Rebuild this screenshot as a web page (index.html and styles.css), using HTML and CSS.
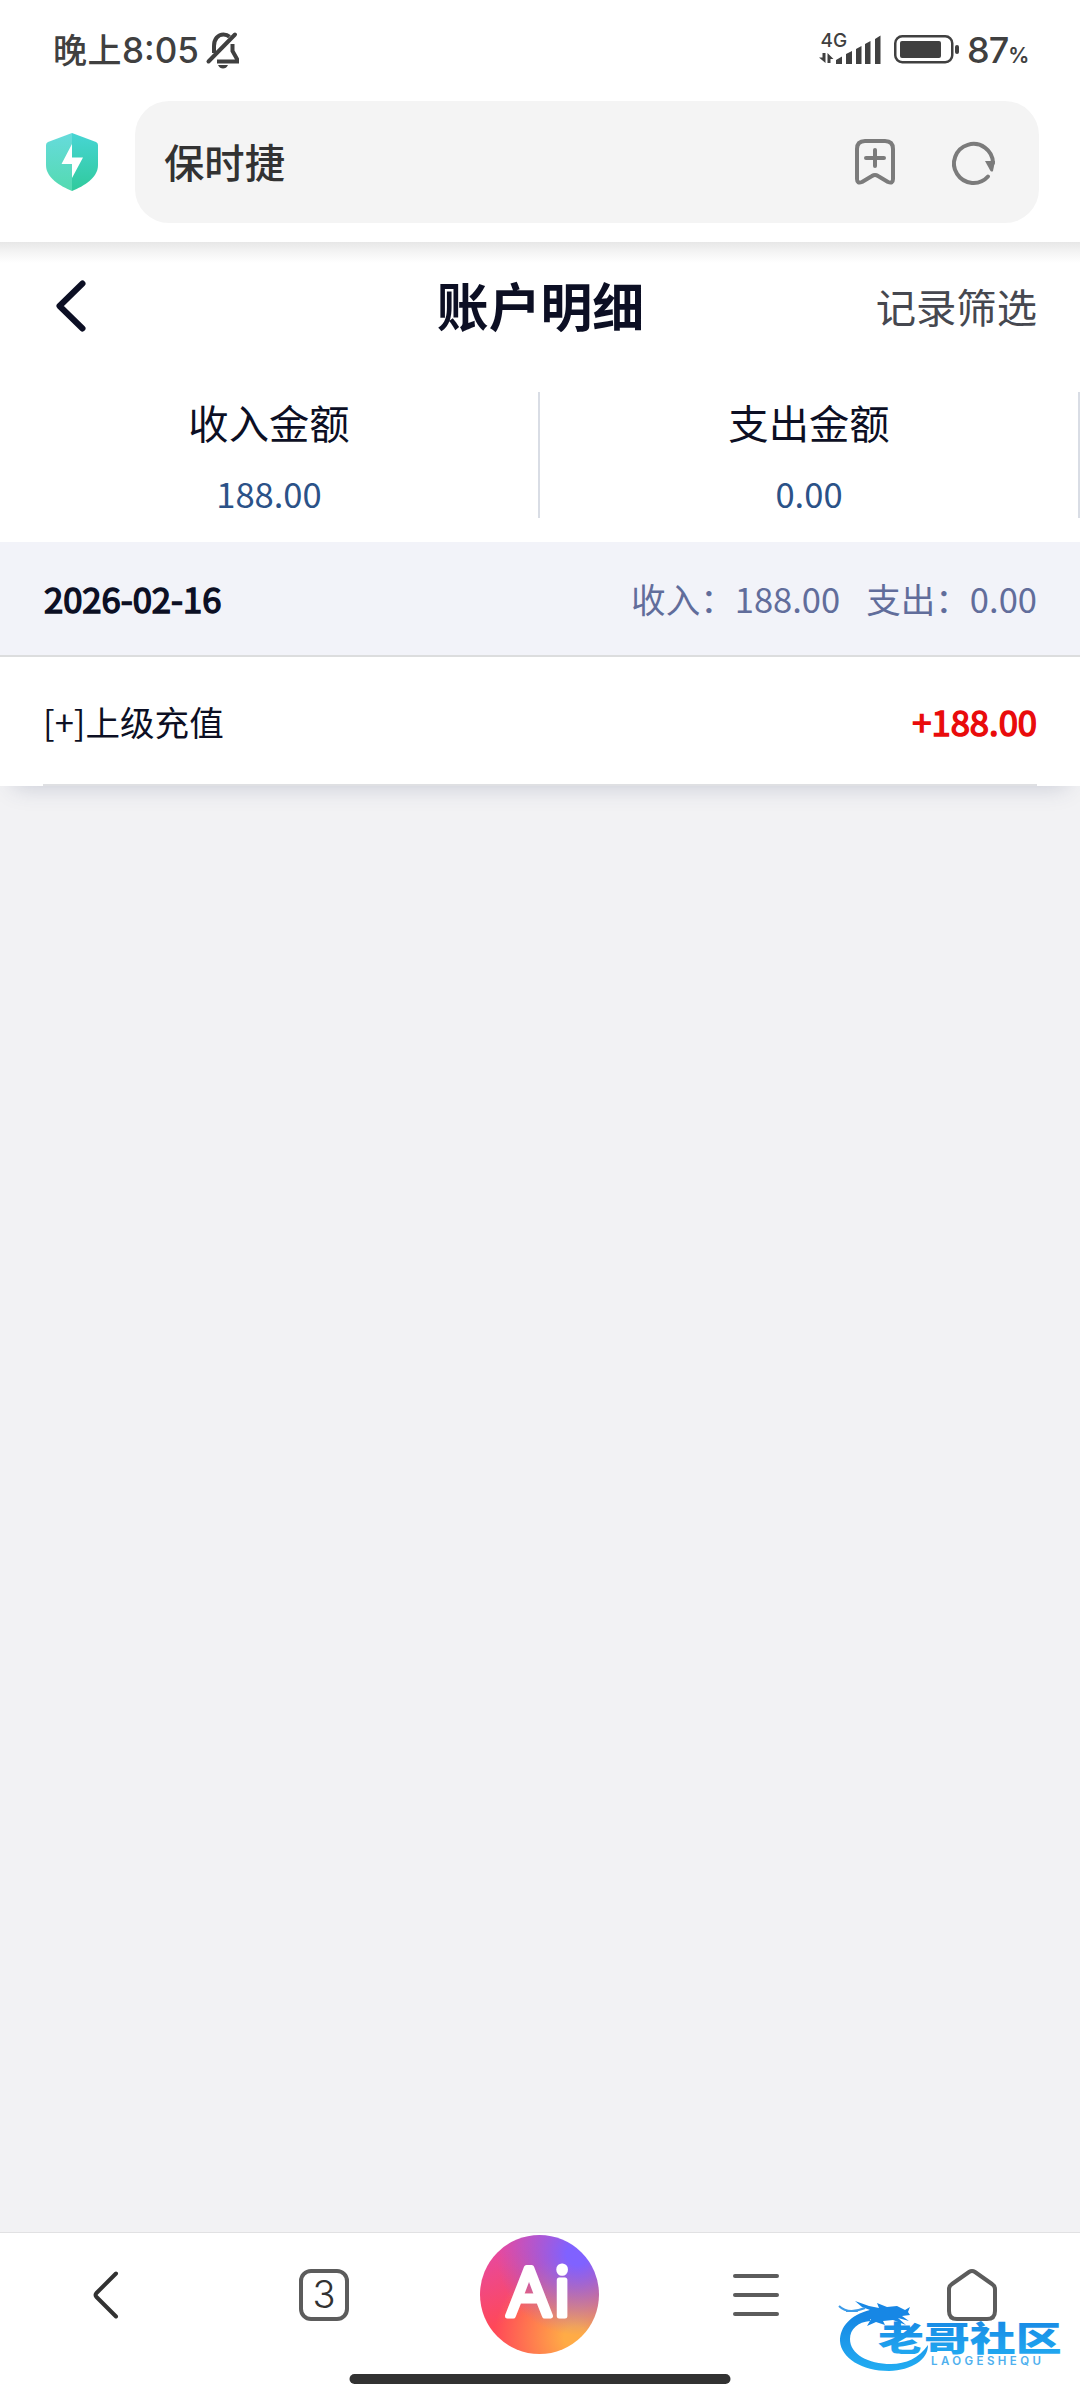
FILE: index.html
```html
<!DOCTYPE html>
<html lang="zh-CN">
<head>
    <meta charset="UTF-8">
    <title>账户明细</title>
    <link rel="stylesheet" href="styles.css">
</head>
<body>
    <!-- 状态栏 -->
    <div class="status">
        <div class="time"><span class="cn">晚上</span>8:05</div>
        <svg class="bell" width="34" height="38" viewBox="0 0 34 38" fill="none" stroke="#404040" stroke-width="4">
            <path d="M8 21V14C8 7 12 2.500 17.500 2.500C20 2.500 22 3.300 23.500 4.700"/>
            <path d="M26.500 12V19L31 27V29.500H11"/>
            <path d="M2.500 29.500L29 2.500" stroke-linecap="round"/>
            <path d="M12 33H22C21 35.500 19 36.500 17 36.500S13 35.500 12 33Z" fill="#404040" stroke="none"/>
        </svg>
        <div class="spacer"></div>
        <svg class="signal" width="62" height="34" viewBox="0 0 62 34" fill="#404040">
            <text x="1.500" y="15" class="net">4G</text>
            <path d="M3.500 21H6.500V31L0 25.500H3.500ZM8.500 31V21L14.500 27H11.500V31Z"/>
            <path d="M17 28L23 24.500V32H17ZM27 22L33 19V32H27ZM37 17L42.500 14V32H37ZM46 12L51.500 9V32H46ZM56 7L61.500 3.500V32H56Z"/>
        </svg>
        <svg class="battery" width="66" height="30" viewBox="0 0 66 30">
            <rect x="1.250" y="1.250" width="57" height="26" rx="7" fill="none" stroke="#404040" stroke-width="2.500"/>
            <rect x="6" y="6" width="41" height="17" rx="2" fill="#404040"/>
            <rect x="61" y="10" width="4" height="9" rx="2" fill="#404040"/>
        </svg>
        <div class="percent">87<small>%</small></div>
    </div>

    <!-- 地址栏 -->
    <div class="browser">
        <svg class="shield" width="52" height="58" viewBox="0 0 52 58">
            <defs>
                <linearGradient id="g1" x1="0" y1="0" x2="0" y2="1"><stop offset="0" stop-color="#66dbdc"/><stop offset="1" stop-color="#54dab0"/></linearGradient>
                <linearGradient id="g2" x1="0" y1="0" x2="0" y2="1"><stop offset="0" stop-color="#47d5d4"/><stop offset="1" stop-color="#30ca9c"/></linearGradient>
            </defs>
            <path d="M26 0L2 9Q0 10 0 12V32C0 45 14 53 26 58Z" fill="url(#g1)"/>
            <path d="M26 0L50 9Q52 10 52 12V32C52 45 38 53 26 58Z" fill="url(#g2)"/>
            <path d="M26 11L15.500 31H26V45L37 24.500H26Z" fill="#fff"/>
        </svg>
        <div class="search">
            <span class="site">保时捷</span>
            <svg class="mark" width="40" height="46" viewBox="0 0 40 46" fill="none" stroke="#7b7b7b" stroke-width="4" stroke-linecap="round" stroke-linejoin="round">
                <path d="M10 2H30Q38 2 38 10V40Q38 45 33 43L23 37Q20 35 17 37L7 43Q2 45 2 40V10Q2 2 10 2Z"/>
                <path d="M20 11V27M11 19H29"/>
            </svg>
            <svg width="44" height="44" viewBox="0 0 44 44">
                <path d="M36 36.500A19.500 19.500 0 1 1 41 23" fill="none" stroke="#7b7b7b" stroke-width="4" stroke-linecap="round"/>
                <path d="M33 21H43L41 31Q40 32 38.500 31Z" fill="#7b7b7b"/>
            </svg>
        </div>
    </div>

    <div class="page">
        <div class="header">
            <svg width="30" height="52" viewBox="0 0 30 52" fill="none" stroke="#0c0f24" stroke-width="6" stroke-linecap="round" stroke-linejoin="round">
                <path d="M26.500 3.500L3.500 26L26.500 48.500"/>
            </svg>
            <h1>账户明细</h1>
            <span class="filter">记录筛选</span>
        </div>

        <div class="total">
            <div class="cell">
                <p>收入金额</p>
                <b>188.00</b>
            </div>
            <div class="cell">
                <p>支出金额</p>
                <b>0.00</b>
            </div>
        </div>

        <div class="list">
            <div class="day">
                <span class="date">2026-02-16</span>
                <span class="sum"><span>收入：188.00</span><span>支出：0.00</span></span>
            </div>
            <div class="item">
                <span>[+]上级充值</span>
                <span class="money">+188.00</span>
            </div>
        </div>
    </div>

    <!-- 底部导航 -->
    <div class="tabbar">
        <div class="tabs">
            <div class="tab">
                <svg class="prev" width="26" height="48" viewBox="0 0 26 48" fill="none" stroke="#323232" stroke-width="4" stroke-linecap="round" stroke-linejoin="round">
                    <path d="M23 2.500L3.500 22Q1.500 24 3.500 26L23 45.500"/>
                </svg>
            </div>
            <div class="tab"><div class="count">3</div></div>
            <div class="tab">
                <div class="ai">
                    <svg width="119" height="119" viewBox="0 0 119 119"><text x="27.500" y="80.500">A</text><text x="73.500" y="80.500">i</text></svg>
                </div>
            </div>
            <div class="tab">
                <div class="menu"><i></i><i></i><i></i></div>
            </div>
            <div class="tab">
                <svg width="50" height="52" viewBox="0 0 50 52" fill="none" stroke="#5c5c5c" stroke-width="4">
                    <path d="M22 3Q25 1 28 3L45 15Q48 17 48 20V42Q48 50 40 50H10Q2 50 2 42V20Q2 17 5 15Z"/>
                </svg>
            </div>
        </div>
        <div class="bar"></div>
    </div>

    <!-- 水印 -->
    <svg class="logo" width="230" height="80" viewBox="0 0 230 80">
        <defs>
            <linearGradient id="g3" x1="0" y1="0" x2="0" y2="1"><stop offset="0" stop-color="#1683e2"/><stop offset="1" stop-color="#22adf2"/></linearGradient>
        </defs>
        <path d="M32 12C12 17 2 29 2 43C3 60 24 73 51 73C74 72 90 62 90 47C81 60 68 66 53 66C30 66 12 56 12 41C12 31 20 24 32 23Z" fill="url(#g3)"/>
        <path d="M32 12L24 9L17 3L31 8L41 10L39 5L49 9L59 8L67 12L72 9L70 14L72 17L64 18L71 23L60 20L68 27L55 22L45 23L47 27L38 24L29 28L33 21L24 24L28 16Z" fill="#1787e5"/>
        <path d="M1 8C8 15 17 14 27 10M8 13H20" fill="none" stroke="#3c9be8" stroke-width="2"/>
        <text class="name" transform="translate(40 53) scale(1.350 1)" fill="url(#g3)">老哥社区</text>
        <text x="93" y="67" class="en" textLength="110">LAOGESHEQU</text>
    </svg>
</body>
</html>
```

FILE: styles.css
```css
* {
    box-sizing: border-box;
}
body {
    margin: 0;
    height: 2400px;
    display: flex;
    flex-direction: column;
    position: relative;
    overflow: hidden;
    background: #fff;
    color: #0c0f24;
    font-family: "Noto Sans CJK SC", sans-serif;
}
svg {
    display: block;
    flex: none;
    overflow: visible;
}
.status {
    height: 101px;
    display: flex;
    padding: 0 52px 0 53px;
    color: #404040;
    font-family: Inter, "Noto Sans CJK SC", sans-serif;
    font-weight: 500;
}
.time {
    font-size: 35px;
    line-height: 100px;
    display: flex;
    width: 153px;
    white-space: nowrap;
}
.time .cn {
    font-size: 34px;
    line-height: 98px;
    letter-spacing: 0.5px;
    font-family: "Noto Sans CJK SC", sans-serif;
}
.bell {
    margin-top: 32px;
}
.spacer {
    flex: 1;
}
.signal {
    margin-top: 32px;
    margin-right: 13px;
}
.net {
    font-size: 19px;
    font-weight: 500;
}
.battery {
    margin-top: 35px;
    margin-right: 7px;
}
.percent {
    font-size: 36px;
    line-height: 100px;
    width: 61px;
    letter-spacing: -1px;
    white-space: nowrap;
}
.percent small {
    font-size: 21px;
    font-weight: 600;
}
.browser {
    height: 141px;
    display: flex;
    align-items: flex-start;
    padding: 0 41px 0 46px;
}
.shield {
    margin-top: 32px;
    margin-right: 37px;
}
.search {
    flex: 1;
    height: 122px;
    display: flex;
    align-items: center;
    padding: 0 43px 0 29px;
    background: #f4f4f4;
    border-radius: 34px;
}
.site {
    flex: 1;
    padding-bottom: 3px;
    font-size: 40.32px;
    font-weight: 500;
    color: #323232;
}
.mark {
    margin-right: 57px;
}
.page {
    flex: 1;
    background: #f2f2f4;
}
.header {
    height: 132px;
    display: grid;
    grid-template-columns: 1fr auto 1fr;
    align-items: center;
    padding: 0 43px 4px 56px;
    background: linear-gradient(#e7e7e7, #f4f4f4 10px, #fff 21px);
}
.header h1 {
    margin: 0;
    padding-bottom: 3px;
    font-size: 51.84px;
    line-height: 60px;
    transform: translateX(-6px);
}
.filter {
    justify-self: end;
    padding-bottom: 2px;
    font-size: 40.32px;
    color: #464850;
}
.total {
    height: 168px;
    display: flex;
    padding: 18px 0 24px;
    background: #fff;
}
.cell {
    flex: 1;
    border-right: 2px solid #d9dde5;
    text-align: center;
}
.cell p {
    margin: 1px 0 13px;
    font-size: 40.32px;
    line-height: 58px;
}
.cell b {
    display: block;
    font-size: 34.56px;
    line-height: 58px;
    font-weight: 400;
    color: #2b5288;
}
.list {
    background: #fff;
    font-size: 34.56px;
    box-shadow: 0 14px 22px -14px rgba(60, 70, 110, 0.25);
}
.day {
    height: 115px;
    display: flex;
    align-items: center;
    justify-content: space-between;
    padding: 0 43px 2px;
    background: #f2f3f9;
    border-bottom: 2px solid #dcddde;
}
.date {
    padding-left: 1px;
    -webkit-text-stroke: 1.5px #0c0f24;
}
.sum {
    display: flex;
    gap: 26px;
    color: #616d9b;
}
.item {
    height: 129px;
    display: flex;
    align-items: center;
    justify-content: space-between;
    margin: 0 43px;
    border-bottom: 2px solid #dfe0e3;
}
.money {
    color: #e90b0b;
    -webkit-text-stroke: 1.5px #e90b0b;
}
.tabbar {
    height: 168px;
    border-top: 1px solid #e1e1e3;
    background: #fff;
}
.tabs {
    height: 141px;
    display: flex;
    padding-top: 2px;
}
.tab {
    flex: 1;
    height: 119px;
    display: flex;
    align-items: center;
    justify-content: center;
}
.prev {
    margin-right: 4px;
}
.count {
    width: 50px;
    height: 52px;
    border: 4px solid #5c5c5c;
    border-radius: 12px;
    font: 300 38px/42px Inter, sans-serif;
    text-align: center;
    color: #323232;
}
.ai {
    margin-right: 1px;
    border-radius: 50%;
    background: radial-gradient(circle at 82% 16%, #8062ff 8%, rgba(128, 98, 255, 0) 58%),
        radial-gradient(circle at 80% 86%, #ffab46 8%, rgba(255, 171, 70, 0) 58%),
        linear-gradient(160deg, #e8499c 15%, #ff4858 60%);
}
.ai text {
    font: 400 68px "Open Sans", sans-serif;
    fill: #fff;
    stroke: #fff;
    stroke-width: 5;
    stroke-linejoin: round;
}
.menu {
    display: grid;
    gap: 15px;
}
.menu i {
    width: 46px;
    height: 4px;
    border-radius: 2px;
    background: #5c5c5c;
}
.bar {
    width: 381px;
    height: 10px;
    margin: 0 auto;
    border-radius: 5px;
    background: #323232;
    transform: translateX(-0.5px);
}
.logo {
    position: absolute;
    left: 838px;
    top: 2298px;
}
.name {
    font-size: 34px;
    font-weight: 900;
}
.en {
    font: 600 11.5px Inter, sans-serif;
    fill: #4fb0ee;
}
```
